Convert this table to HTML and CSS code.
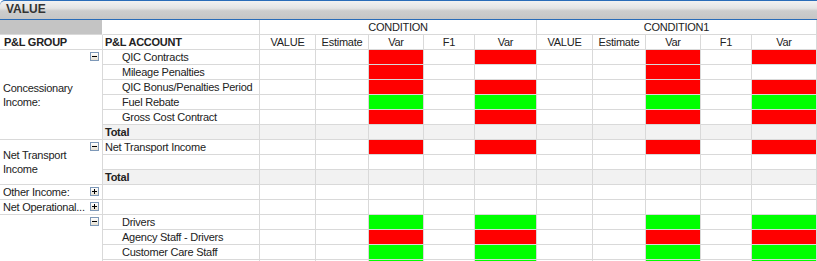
FILE: index.html
```html
<!DOCTYPE html>
<html>
<head>
<meta charset="utf-8">
<link rel="stylesheet" href="styles.css">
</head>
<body>
<div class="pane">
  <div class="title">VALUE</div>
  <div class="grid">
    <div class="c corner"></div>
    <div class="c"></div>
    <div class="c cond">CONDITION</div>
    <div class="c cond">CONDITION1</div>

    <div class="c hd">P&amp;L GROUP</div>
    <div class="c hd">P&amp;L ACCOUNT</div>
    <div class="c ch">VALUE</div><div class="c ch">Estimate</div><div class="c ch">Var</div><div class="c ch">F1</div><div class="c ch">Var</div>
    <div class="c ch">VALUE</div><div class="c ch">Estimate</div><div class="c ch">Var</div><div class="c ch">F1</div><div class="c ch">Var</div>

    <!-- row 1 -->
    <div class="c grp span6"><span class="lbl">Concessionary Income:</span><span class="tog minus"></span></div>
    <div class="c ac ind">QIC Contracts</div>
    <div class="c"></div><div class="c"></div><div class="c r"></div><div class="c"></div><div class="c r"></div>
    <div class="c"></div><div class="c"></div><div class="c r"></div><div class="c"></div><div class="c r"></div>
    <!-- row 2 -->
    <div class="c ac ind">Mileage Penalties</div>
    <div class="c"></div><div class="c"></div><div class="c r"></div><div class="c"></div><div class="c"></div>
    <div class="c"></div><div class="c"></div><div class="c r"></div><div class="c"></div><div class="c"></div>
    <!-- row 3 -->
    <div class="c ac ind">QIC Bonus/Penalties Period</div>
    <div class="c"></div><div class="c"></div><div class="c r"></div><div class="c"></div><div class="c r"></div>
    <div class="c"></div><div class="c"></div><div class="c r"></div><div class="c"></div><div class="c r"></div>
    <!-- row 4 -->
    <div class="c ac ind">Fuel Rebate</div>
    <div class="c"></div><div class="c"></div><div class="c g"></div><div class="c"></div><div class="c g"></div>
    <div class="c"></div><div class="c"></div><div class="c g"></div><div class="c"></div><div class="c g"></div>
    <!-- row 5 -->
    <div class="c ac ind">Gross Cost Contract</div>
    <div class="c"></div><div class="c"></div><div class="c r"></div><div class="c"></div><div class="c r"></div>
    <div class="c"></div><div class="c"></div><div class="c r"></div><div class="c"></div><div class="c r"></div>
    <!-- row 6 total -->
    <div class="c ac tot">Total</div>
    <div class="c t"></div><div class="c t"></div><div class="c t"></div><div class="c t"></div><div class="c t"></div>
    <div class="c t"></div><div class="c t"></div><div class="c t"></div><div class="c t"></div><div class="c t"></div>

    <!-- row 7 -->
    <div class="c grp span3"><span class="lbl">Net Transport Income</span><span class="tog minus"></span></div>
    <div class="c ac">Net Transport Income</div>
    <div class="c"></div><div class="c"></div><div class="c r"></div><div class="c"></div><div class="c r"></div>
    <div class="c"></div><div class="c"></div><div class="c r"></div><div class="c"></div><div class="c r"></div>
    <!-- row 8 -->
    <div class="c ac"></div>
    <div class="c"></div><div class="c"></div><div class="c"></div><div class="c"></div><div class="c"></div>
    <div class="c"></div><div class="c"></div><div class="c"></div><div class="c"></div><div class="c"></div>
    <!-- row 9 total -->
    <div class="c ac tot">Total</div>
    <div class="c t"></div><div class="c t"></div><div class="c t"></div><div class="c t"></div><div class="c t"></div>
    <div class="c t"></div><div class="c t"></div><div class="c t"></div><div class="c t"></div><div class="c t"></div>

    <!-- row 10 -->
    <div class="c grp"><span class="lbl one">Other Income:</span><span class="tog plus"></span></div>
    <div class="c ac"></div>
    <div class="c"></div><div class="c"></div><div class="c"></div><div class="c"></div><div class="c"></div>
    <div class="c"></div><div class="c"></div><div class="c"></div><div class="c"></div><div class="c"></div>
    <!-- row 11 -->
    <div class="c grp"><span class="lbl one">Net Operational...</span><span class="tog plus"></span></div>
    <div class="c ac"></div>
    <div class="c"></div><div class="c"></div><div class="c"></div><div class="c"></div><div class="c"></div>
    <div class="c"></div><div class="c"></div><div class="c"></div><div class="c"></div><div class="c"></div>

    <!-- row 12 -->
    <div class="c grp span4"><span class="lbl"></span><span class="tog minus"></span></div>
    <div class="c ac ind">Drivers</div>
    <div class="c"></div><div class="c"></div><div class="c g"></div><div class="c"></div><div class="c g"></div>
    <div class="c"></div><div class="c"></div><div class="c g"></div><div class="c"></div><div class="c g"></div>
    <!-- row 13 -->
    <div class="c ac ind">Agency Staff - Drivers</div>
    <div class="c"></div><div class="c"></div><div class="c r"></div><div class="c"></div><div class="c r"></div>
    <div class="c"></div><div class="c"></div><div class="c r"></div><div class="c"></div><div class="c r"></div>
    <!-- row 14 -->
    <div class="c ac ind">Customer Care Staff</div>
    <div class="c"></div><div class="c"></div><div class="c g"></div><div class="c"></div><div class="c g"></div>
    <div class="c"></div><div class="c"></div><div class="c g"></div><div class="c"></div><div class="c g"></div>
    <!-- row 15 -->
    <div class="c ac ind"></div>
    <div class="c"></div><div class="c"></div><div class="c g"></div><div class="c"></div><div class="c g"></div>
    <div class="c"></div><div class="c"></div><div class="c g"></div><div class="c"></div><div class="c g"></div>
  </div>
</div>
</body>
</html>
```
FILE: styles.css
```css
* { box-sizing: border-box; }
html, body {
  margin: 0;
  padding: 0;
  background: #fff;
  width: 817px;
  height: 261px;
  overflow: hidden;
}
body {
  font-family: "Liberation Sans", Arial, sans-serif;
  font-size: 11px;
  letter-spacing: -0.25px;
  color: #222;
}
.pane {
  width: 817px;
  height: 261px;
  overflow: hidden;
}
.title {
  height: 20px;
  border-top: 1px solid #2a6cb8;
  border-bottom: 1px solid #2a6cb8;
  border-top-left-radius: 5px;
  background: linear-gradient(#f2f2f2 0%, #e4e4e4 40%, #cdcdcd 55%, #c6c6c6 100%);
  font-weight: bold;
  font-size: 12px;
  letter-spacing: 0;
  color: #333;
  line-height: 17px;
  padding-left: 6px;
}
.grid {
  display: grid;
  grid-template-columns: 103px 157px 56px 53px 55px 51px 62px 56px 53px 55px 51px 65px;
  grid-auto-rows: 15px;
}
.c {
  border-right: 1px solid #d9d9d9;
  border-bottom: 1px solid #d9d9d9;
  line-height: 14px;
  white-space: nowrap;
  overflow: hidden;
}
.corner {
  background: #c4c4c4;
  border-right: 1px solid #fff;
}
.cond {
  grid-column: span 5;
  text-align: center;
}
.hd {
  font-weight: bold;
  padding-left: 4px;
}
.hd + .hd { padding-left: 2px; }
.ch {
  text-align: center;
}
.grp {
  display: flex;
  align-items: center;
  padding-left: 3px;
  white-space: normal;
}
.span6 { grid-row: span 6; }
.span4 { grid-row: span 4; }
.span3 { grid-row: span 3; }
.lbl {
  flex: 1;
  min-width: 0;
  line-height: 14px;
}
.lbl.one {
  white-space: nowrap;
  overflow: hidden;
}
.tog {
  align-self: flex-start;
  flex: none;
  position: relative;
  width: 9px;
  height: 9px;
  margin: 2px 3px 0 1px;
  border: 1px solid #7d98b8;
  background: linear-gradient(#ffffff, #e6e0d2);
}
.tog::before {
  content: "";
  position: absolute;
  left: 1px;
  top: 3px;
  width: 5px;
  height: 1px;
  background: #000;
}
.tog.plus::after {
  content: "";
  position: absolute;
  left: 3px;
  top: 1px;
  width: 1px;
  height: 5px;
  background: #000;
}
.ac { padding-left: 2px; }
.ac.ind { padding-left: 19px; }
.ac.tot { font-weight: bold; background: #f2f2f2; }
.t { background: #f2f2f2; }
.r { background: #ff0000; }
.g { background: #00ff00; }
```
